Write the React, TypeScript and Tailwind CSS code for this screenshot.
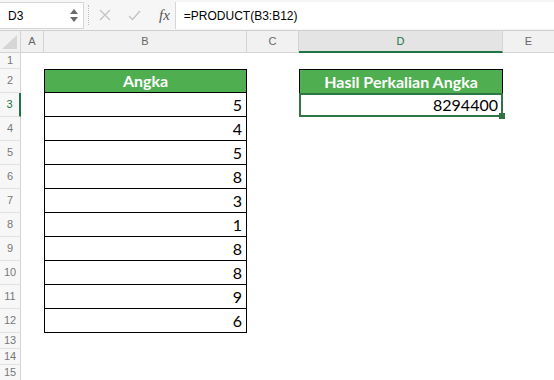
import React from 'react';

const values = [5, 4, 5, 8, 3, 1, 8, 8, 9, 6];
const rows = Array.from({ length: 15 }, (_, i) => i + 1);

const App: React.FC = () => {
  return (
    <div className="w-[554px] h-[380px] overflow-hidden bg-white font-['Lato',sans-serif]">
      {/* formula bar */}
      <div className="h-[31px] flex items-center bg-[#f6f6f6] border-b border-[#cfcfcf] font-['Liberation_Sans',sans-serif]">
        <div className="w-[84px] h-[27px] mt-[1px] flex items-center justify-between bg-white border border-[#d6d6d6] border-l-0 pl-2 pr-[5px]">
          <span className="text-[12px] text-black">D3</span>
          <div className="flex flex-col gap-[3px]">
            <svg width="8" height="5" viewBox="0 0 8 5"><path d="M0 5 L4 0 L8 5 Z" fill="#6b6b6b" /></svg>
            <svg width="8" height="5" viewBox="0 0 8 5"><path d="M0 0 L4 5 L8 0 Z" fill="#6b6b6b" /></svg>
          </div>
        </div>
        <div className="w-px h-[20px] ml-[4px] border-l border-dotted border-[#bdbdbd]" />
        <svg className="ml-[10px]" width="12" height="12" viewBox="0 0 12 12">
          <path d="M1 1 L11 11 M11 1 L1 11" stroke="#c2c2c2" strokeWidth="1.3" />
        </svg>
        <svg className="ml-[17px]" width="13" height="11" viewBox="0 0 13 11">
          <path d="M1 6 L4.5 9.5 L12 1" stroke="#c2c2c2" strokeWidth="1.3" fill="none" />
        </svg>
        <span className="ml-[18px] text-[15px] italic text-[#555] font-['Liberation_Serif',serif]">fx</span>
        <div className="ml-[5px] flex-1 h-[27px] mt-[1px] flex items-center bg-white border-l border-[#d6d6d6] pl-[8px] text-[12px] text-black">
          =PRODUCT(B3:B12)
        </div>
      </div>

      {/* column headers */}
      <div className="flex h-[22px] text-[11px] text-[#666] font-['Liberation_Sans',sans-serif]">
        <div className="w-[21px] shrink-0 relative bg-[#f1f1f1] border-r border-b border-[#d4d4d4]">
          <svg className="absolute left-[2px] top-[4px]" width="15" height="14" viewBox="0 0 15 14">
            <path d="M15 0 L15 14 L0 14 Z" fill="#d6d6d6" />
          </svg>
        </div>
        <div className="w-[23px] shrink-0 flex items-center justify-center bg-[#f1f1f1] border-r border-b border-[#d4d4d4]">A</div>
        <div className="w-[203px] shrink-0 flex items-center justify-center bg-[#f1f1f1] border-r border-b border-[#d4d4d4]">B</div>
        <div className="w-[52px] shrink-0 flex items-center justify-center bg-[#f1f1f1] border-r border-b border-[#d4d4d4]">C</div>
        <div className="w-[204px] shrink-0 flex items-center justify-center bg-[#e4e4e4] border-r border-[#d4d4d4] border-b-2 border-b-[#217346] text-[#217346]">D</div>
        <div className="flex-1 flex items-center justify-center bg-[#f1f1f1] border-b border-[#d4d4d4]">E</div>
      </div>

      {rows.map(n => {
        const tall = n >= 2 && n <= 12;
        const inTable = tall;
        return (
          <div key={n} className={`flex ${tall ? 'h-6' : 'h-4'}`}>
            <div
              className={`w-[21px] shrink-0 flex items-center justify-center text-[11px] font-['Liberation_Sans',sans-serif] bg-[#f7f7f7] border-b border-[#e2e2e2] ${
                n === 3 ? 'text-[#217346] border-r-2 border-r-[#217346]' : 'text-[#777] border-r border-r-[#d4d4d4]'
              }`}
            >
              {n}
            </div>
            <div className="w-[23px] shrink-0" />
            {inTable ? (
              n === 2 ? (
                <div className="w-[203px] shrink-0 flex items-center justify-center bg-[#4eae50] border border-black text-white font-bold text-[16px]">
                  Angka
                </div>
              ) : (
                <div className="w-[203px] shrink-0 flex items-center justify-end pr-[4px] border-x border-b border-black text-black text-[16px]">
                  {values[n - 3]}
                </div>
              )
            ) : (
              <div className="w-[203px] shrink-0" />
            )}
            <div className="w-[52px] shrink-0" />
            {n === 2 ? (
              <div className="w-[204px] shrink-0 flex items-center justify-center bg-[#4eae50] border-t border-x border-black text-white font-bold text-[16px]">
                Hasil Perkalian Angka
              </div>
            ) : n === 3 ? (
              <div className="w-[204px] shrink-0 relative flex items-center justify-end pr-[3px] border-2 border-[#2f7545] text-black text-[16px]">
                8294400
                <div className="absolute -right-[4px] -bottom-[4px] w-[6px] h-[6px] bg-[#2f7545]" />
              </div>
            ) : (
              <div className="w-[204px] shrink-0" />
            )}
            <div className="flex-1" />
          </div>
        );
      })}
    </div>
  );
};

export default App;
